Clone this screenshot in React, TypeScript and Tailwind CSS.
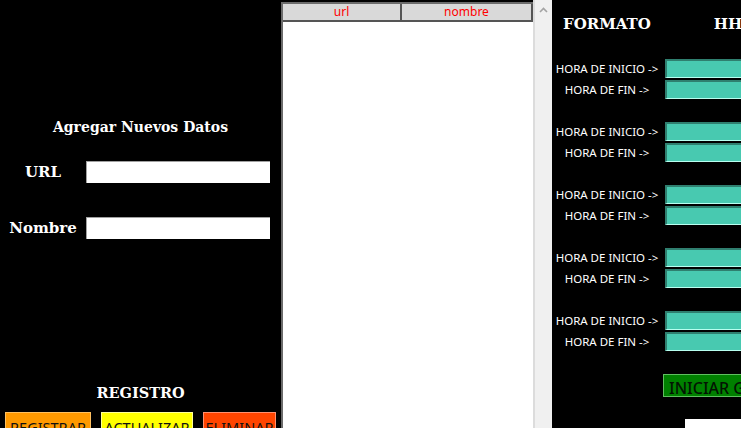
import React from "react";

const serif = "font-['DejaVu_Serif','Liberation_Serif',serif] font-bold text-white";
const sans = "font-['Noto_Sans','Open_Sans',sans-serif]";

const HoraGroup = () => (
  <div className="flex flex-col gap-[2px]">
    {["HORA DE INICIO ->", "HORA DE FIN ->"].map((label) => (
      <div key={label} className="flex items-center h-[19px]">
        <div className={`w-[110px] text-center text-[11.5px] text-white leading-none ${sans}`}>
          {label}
        </div>
        <div className="ml-[3px] flex-1 h-[19px] bg-[#48c9b0] border-t-2 border-l-2 border-t-[#2f7f6f] border-l-[#2f7f6f] border-b border-b-[#b8fff0]" />
      </div>
    ))}
  </div>
);

export default function App() {
  return (
    <div className="flex h-[428px] w-[741px] overflow-hidden bg-black">
      {/* Formulario */}
      <div className="w-[281px] shrink-0 flex flex-col pt-[119px]">
        <div className={`h-4 text-center text-[14px] leading-4 ${serif}`}>
          Agregar Nuevos Datos
        </div>
        <div className="flex items-center mt-[26px] h-[22px]">
          <div className={`w-[86px] text-center text-[15px] ${serif}`}>URL</div>
          <div className="w-[184px] h-[22px] bg-white border-t border-l border-[#a0a0a0]" />
        </div>
        <div className="flex items-center mt-[34px] h-[22px]">
          <div className={`w-[86px] text-center text-[15px] ${serif}`}>Nombre</div>
          <div className="w-[184px] h-[22px] bg-white border-t border-l border-[#a0a0a0]" />
        </div>
        <div className={`mt-[146px] h-4 text-center text-[14.5px] leading-4 ${serif}`}>
          REGISTRO
        </div>
        <div className={`flex mt-[11px] pl-[5px] text-[14.5px] text-[#111] ${sans}`}>
          <div className="w-[86px] h-[28px] pt-[4px] text-center bg-[#ff9900] border border-[#ffc060]">
            REGISTRAR
          </div>
          <div className="ml-[10px] w-[92px] h-[28px] pt-[4px] text-center bg-[#ffff00] border border-[#ffff99]">
            ACTUALIZAR
          </div>
          <div className="ml-[10px] w-[73px] h-[28px] pt-[4px] text-center bg-[#ff4500] border border-[#ff9070]">
            ELIMINAR
          </div>
        </div>
      </div>

      {/* Tabla */}
      <div className="w-[271px] shrink-0 flex">
        <div className="w-[252px] mt-[2px] bg-white border-t-2 border-l-2 border-[#6b6b6b]">
          <div className={`flex h-[18px] bg-[#d9d9d9] border-b-2 border-b-[#555] text-[12px] text-[#ff0000] leading-[16px] ${sans}`}>
            <div className="w-[119px] text-center border-r-2 border-r-[#555]">url</div>
            <div className="flex-1 text-center border-r-2 border-r-[#555]">nombre</div>
          </div>
        </div>
        <div className="w-[2px] bg-[#dcdcdc]" />
        <div className="w-[17px] bg-[#f0f0f0] flex justify-center pt-[7px]">
          <svg width="9" height="6" viewBox="0 0 9 6">
            <path d="M1 5 L4.5 1.5 L8 5" fill="none" stroke="#a3a3a3" strokeWidth="1.6" />
          </svg>
        </div>
      </div>

      {/* Horarios */}
      <div className="flex-1 flex flex-col">
        <div className={`flex h-[20px] mt-[14px] pl-[11px] text-[15px] leading-[20px] ${serif}`}>
          <span>FORMATO</span>
          <span className="ml-[63px]">HH</span>
        </div>
        <div className="mt-[25px] flex flex-col gap-[23px]">
          <HoraGroup />
          <HoraGroup />
          <HoraGroup />
          <HoraGroup />
          <HoraGroup />
        </div>
        <div className="mt-[23px] ml-[111px] h-[27px] bg-[#008000] border border-[#5fbf5f] pl-[5px] pt-[1px] overflow-hidden whitespace-nowrap">
          <span className={`text-[16px] font-medium text-[#031403] ${sans}`}>INICIAR GRABACIÓN</span>
        </div>
        <div className="mt-[22px] ml-[133px] h-[10px] bg-white" />
      </div>
    </div>
  );
}
